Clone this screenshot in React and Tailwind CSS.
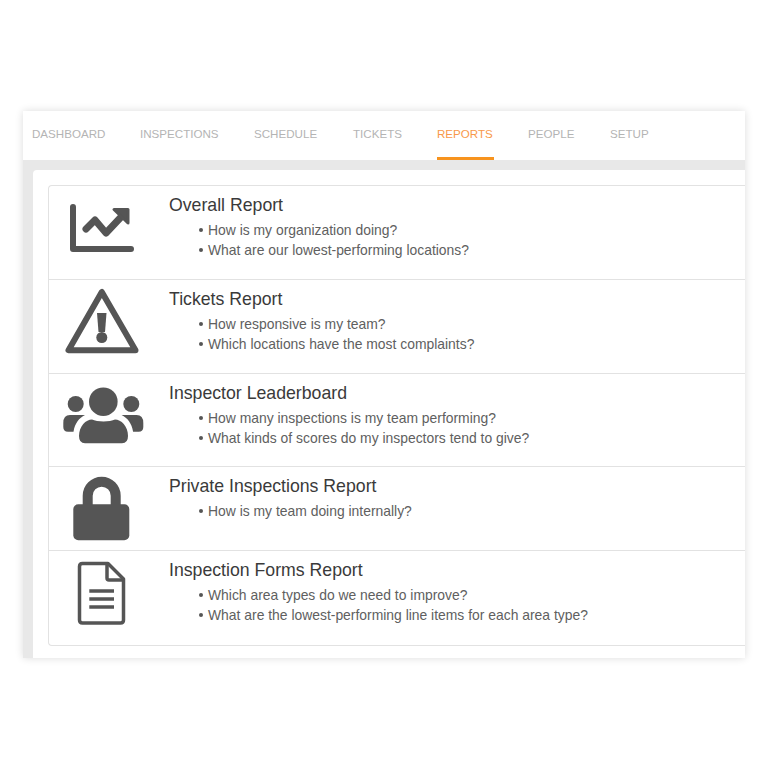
import React from 'react';

const tabs = [
    { label: 'DASHBOARD', width: 'w-[74px]' },
    { label: 'INSPECTIONS', width: 'w-[80px]' },
    { label: 'SCHEDULE', width: 'w-[65px]' },
    { label: 'TICKETS', width: 'w-[50px]' },
    { label: 'REPORTS', width: 'w-[57px]', active: true },
    { label: 'PEOPLE', width: 'w-[48px]' },
    { label: 'SETUP', width: 'w-[39px]' },
];

const ChartIcon = () => (
    <svg viewBox="0 0 80 72" className="w-[80px] h-[72px] overflow-visible" fill="none" stroke="#555555" strokeLinecap="round" strokeLinejoin="round">
        <path d="M11 13V55H69" strokeWidth="6" />
        <path d="M24 35L33 26L44 39L60 22" strokeWidth="7" />
        <path d="M52 15.5H66V29Z" fill="#555555" strokeWidth="3" />
    </svg>
);

const WarningIcon = () => (
    <svg viewBox="0 0 80 72" className="w-[80px] h-[72px] overflow-visible" fill="none" stroke="#555555" strokeLinejoin="round">
        <path d="M39.8 5L6.5 63.2H73.5Z" strokeWidth="6" />
        <path d="M35 26H44.5L43 45H36.5Z" fill="#555555" stroke="none" />
        <circle cx="39.8" cy="50.5" r="5.5" fill="#555555" stroke="none" />
    </svg>
);

const PeopleIcon = () => (
    <svg viewBox="0 0 80 72" className="w-[80px] h-[72px] overflow-visible" fill="#555555">
        <circle cx="41.3" cy="20.7" r="14.3" />
        <circle cx="13.7" cy="23" r="8" />
        <circle cx="69.3" cy="23" r="8" />
        <path d="M17 55C17 45 24 38.5 30 38.5C35 41 48 41 53 38.5C59 38.5 66 45 66 55Q66 62.3 60 62.3H23Q17 62.3 17 55Z" />
        <path d="M8 34H23C17 37 13 42 11.5 50.7H6Q1.3 50.7 1.3 46V42Q1.3 34 8 34Z" />
        <path d="M74.6 34H59.6C65.6 37 69.6 42 71.1 50.7H76.6Q81.3 50.7 81.3 46V42Q81.3 34 74.6 34Z" />
    </svg>
);

const LockIcon = () => (
    <svg viewBox="0 0 80 72" className="w-[80px] h-[72px] overflow-visible" fill="none">
        <path d="M25.7 31V21.7A14 14 0 0 1 53.7 21.7V31" stroke="#555555" strokeWidth="10" />
        <rect x="11.3" y="30.3" width="56" height="36" rx="5" fill="#555555" />
    </svg>
);

const FileIcon = () => (
    <svg viewBox="0 0 80 72" className="w-[80px] h-[72px] overflow-visible" fill="none" stroke="#555555" strokeWidth="3.5" strokeLinejoin="round">
        <path d="M20.5 5.5H46L61.5 21V62Q61.5 65 58.5 65H20.5Q17.5 65 17.5 62V8.5Q17.5 5.5 20.5 5.5Z" />
        <path d="M45 5.5V20Q45 22 47 22H61.5" />
        <path d="M27.3 33H52M27.3 41H52M27.3 49H52" />
    </svg>
);

const reports = [
    {
        title: 'Overall Report',
        height: 'h-[93px]',
        icon: <ChartIcon />,
        items: ['How is my organization doing?', 'What are our lowest-performing locations?'],
    },
    {
        title: 'Tickets Report',
        height: 'h-[94px]',
        icon: <WarningIcon />,
        items: ['How responsive is my team?', 'Which locations have the most complaints?'],
    },
    {
        title: 'Inspector Leaderboard',
        height: 'h-[93px]',
        icon: <PeopleIcon />,
        items: ['How many inspections is my team performing?', 'What kinds of scores do my inspectors tend to give?'],
    },
    {
        title: 'Private Inspections Report',
        height: 'h-[84px]',
        icon: <LockIcon />,
        items: ['How is my team doing internally?'],
    },
    {
        title: 'Inspection Forms Report',
        height: 'h-[95px]',
        icon: <FileIcon />,
        items: ['Which area types do we need to improve?', 'What are the lowest-performing line items for each area type?'],
    },
];

const App = () => {
    return (
        <div className="w-[768px] h-[768px] bg-white pt-[111px] pl-[23px] font-['Liberation_Sans',Arial,sans-serif]">
            <div className="w-[722px] h-[547px] flex flex-col bg-[#e8e8e8] shadow-[0_0_8px_rgba(0,0,0,0.14)]">
                {/* --- TABS --- */}
                <div className="h-[49px] flex-shrink-0 bg-white pl-[9px] flex gap-[34px]">
                    {tabs.map((tab) => (
                        <div
                            key={tab.label}
                            className={`${tab.width} h-[49px] pt-4 text-[11.6px] leading-[14px] whitespace-nowrap ${tab.active ? 'text-[#f8994a] border-b-[3px] border-[#f7931e]' : 'text-[#b4b4b4]'}`}
                        >
                            {tab.label}
                        </div>
                    ))}
                </div>

                {/* --- CONTENT --- */}
                <div className="flex-1 mt-[10px] ml-[10px] bg-white rounded-tl pt-[15px] pl-[15px]">
                    <div className="border border-r-0 border-[#e2e2e2] rounded-l">
                        {reports.map((report, i) => (
                            <div
                                key={report.title}
                                className={`${report.height} flex ${i > 0 ? 'border-t border-[#e2e2e2]' : ''}`}
                            >
                                <div className={`w-[106px] mr-[14px] flex justify-center items-start flex-shrink-0 ${i > 0 ? 'pt-[7px]' : 'pt-2'}`}>
                                    {report.icon}
                                </div>
                                <div className="pt-[9px]">
                                    <div className="text-[17.7px] leading-5 text-[#3a3a3a]">{report.title}</div>
                                    <ul className="mt-[5px] pl-[30px] text-[13.9px] leading-5 text-[#606060]">
                                        {report.items.map((item) => (
                                            <li key={item} className="flex items-center">
                                                <span className="w-1 h-1 mr-[5px] rounded-full bg-[#555555] flex-shrink-0" />
                                                {item}
                                            </li>
                                        ))}
                                    </ul>
                                </div>
                            </div>
                        ))}
                    </div>
                </div>
            </div>
        </div>
    );
};

export default App;
